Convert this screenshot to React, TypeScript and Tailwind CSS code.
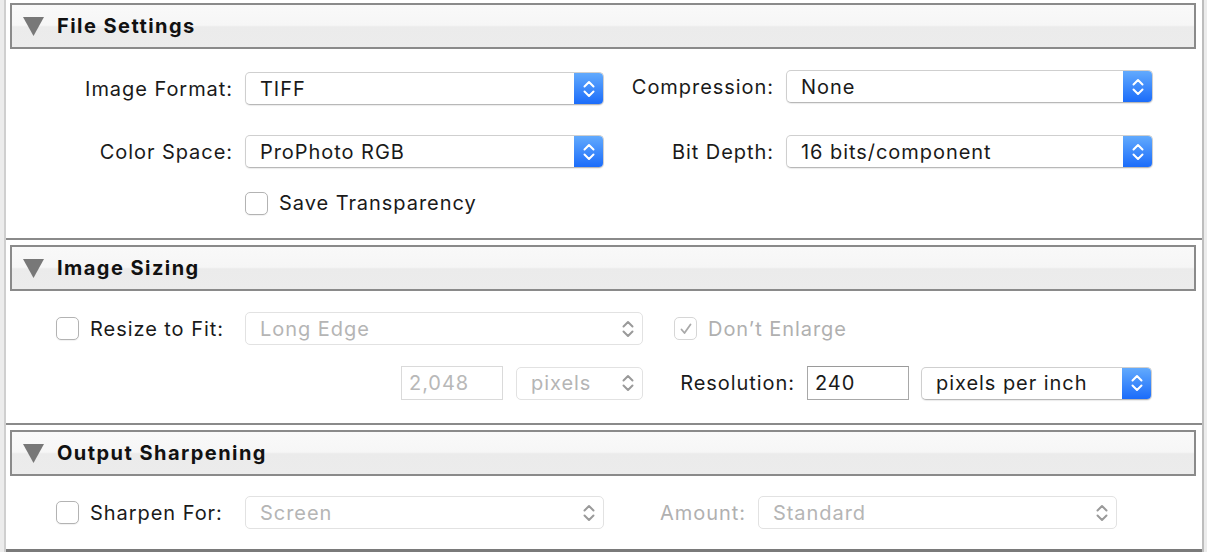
import React from "react";

const font = { fontFamily: "Inter, 'Open Sans', 'Liberation Sans', sans-serif" };

function Chevrons({ color = "#ffffff" }: { color?: string }) {
  return (
    <svg width="14" height="20" viewBox="0 0 14 20" fill="none">
      <path d="M2.5 7.5 L7 3 L11.5 7.5" stroke={color} strokeWidth="2" strokeLinecap="round" strokeLinejoin="round" />
      <path d="M2.5 12.5 L7 17 L11.5 12.5" stroke={color} strokeWidth="2" strokeLinecap="round" strokeLinejoin="round" />
    </svg>
  );
}

function Header({ title }: { title: string }) {
  return (
    <div className="ml-[4px] mr-[6px] h-[46px] border-2 border-[#8a8a8a] bg-[linear-gradient(to_bottom,#f9f9f9_0%,#f6f6f6_48%,#ebebeb_52%,#ececec_100%)] flex items-center">
      <svg width="22" height="20" viewBox="0 0 22 20" className="ml-[11px]">
        <polygon points="0,1 21,1 10.5,20" fill="#787878" />
      </svg>
      <span className="ml-[12px] text-[20px] font-bold text-[#111] tracking-[1.45px]">{title}</span>
    </div>
  );
}

function Select({ value, width, disabled = false }: { value: string; width: number; disabled?: boolean }) {
  return (
    <div
      className={
        "h-[33px] rounded-[5px] flex items-center overflow-hidden bg-white " +
        (disabled
          ? "border border-[#e2e2e2]"
          : "border border-[#cfcfcf] border-b-[#b8b8b8] shadow-[0_1px_1px_rgba(0,0,0,0.08)]")
      }
      style={{ width }}
    >
      <span className={"flex-1 pl-[14px] text-[20px] " + (disabled ? "text-[#b5b5b5]" : "text-[#1a1a1a]")}>{value}</span>
      {disabled ? (
        <div className="w-[29px] h-full flex items-center justify-center">
          <Chevrons color="#9a9a9a" />
        </div>
      ) : (
        <div className="w-[29px] h-full flex items-center justify-center bg-[linear-gradient(to_bottom,#62aafd,#1b6cfa)]">
          <Chevrons />
        </div>
      )}
    </div>
  );
}

function Checkbox({ checked = false, disabled = false }: { checked?: boolean; disabled?: boolean }) {
  return (
    <div
      className={
        "w-[23px] h-[23px] rounded-[5px] bg-white flex items-center justify-center " +
        (disabled ? "border border-[#d6d6d6]" : "border border-[#b3b3b3] shadow-[0_1px_1px_rgba(0,0,0,0.06)]")
      }
    >
      {checked && (
        <svg width="14" height="14" viewBox="0 0 14 14" fill="none">
          <path d="M2.5 7.5 L5.5 11 L11.5 2.5" stroke="#a9a9a9" strokeWidth="1.8" strokeLinecap="round" strokeLinejoin="round" />
        </svg>
      )}
    </div>
  );
}

function Label({ text, width, disabled = false }: { text: string; width: number; disabled?: boolean }) {
  return (
    <div className={"text-right text-[20px] pr-[12px] whitespace-nowrap " + (disabled ? "text-[#b0b0b0]" : "text-[#1a1a1a]")} style={{ width }}>
      {text}
    </div>
  );
}

function TextField({ value, width, disabled = false }: { value: string; width: number; disabled?: boolean }) {
  return (
    <div
      className={
        "h-[34px] bg-white flex items-center pl-[7px] text-[20px] " +
        (disabled ? "border border-[#dadada] text-[#b8b8b8]" : "border border-[#a8a8a8] border-t-[#9a9a9a] text-[#1a1a1a]")
      }
      style={{ width }}
    >
      {value}
    </div>
  );
}

export default function App() {
  return (
    <div className="w-[1207px] h-[552px] bg-[#ececec] overflow-hidden tracking-[0.95px]" style={font}>
      <div className="ml-[4px] w-[1200px] h-[552px] bg-white border-x-2 border-l-[#cfcfcf] border-r-[#bdbdbd] flex flex-col">
        {/* File Settings */}
        <div className="pt-[3px]">
          <Header title="File Settings" />
          <div className="h-[189px] flex flex-col pt-[23px]">
            <div className="flex items-start">
              <div className="flex items-center">
                <Label text="Image Format:" width={239} />
                <Select value="TIFF" width={359} />
              </div>
              <div className="flex items-center -mt-[2px]">
                <Label text="Compression:" width={182} />
                <Select value="None" width={367} />
              </div>
            </div>
            <div className="flex items-center mt-[30px]">
              <Label text="Color Space:" width={239} />
              <Select value="ProPhoto RGB" width={359} />
              <Label text="Bit Depth:" width={182} />
              <Select value="16 bits/component" width={367} />
            </div>
            <div className="flex items-center mt-[20px] ml-[239px]">
              <Checkbox />
              <span className="ml-[11px] text-[20px] text-[#1a1a1a]">Save Transparency</span>
            </div>
          </div>
        </div>
        <div className="h-[2px] bg-[#8a8a8a]" />

        {/* Image Sizing */}
        <div className="pt-[5px]">
          <Header title="Image Sizing" />
          <div className="h-[132px] flex flex-col pt-[21px]">
            <div className="flex items-center">
              <div className="ml-[50px]"><Checkbox /></div>
              <span className="ml-[11px] w-[155px] text-[20px] text-[#1a1a1a] whitespace-nowrap">Resize to Fit:</span>
              <Select value="Long Edge" width={398} disabled />
              <div className="ml-[31px]"><Checkbox checked disabled /></div>
              <span className="ml-[11px] text-[20px] text-[#b0b0b0]">Don’t Enlarge</span>
            </div>
            <div className="flex items-center mt-[21px]">
              <div className="ml-[395px]"><TextField value="2,048" width={102} disabled /></div>
              <div className="ml-[13px]"><Select value="pixels" width={127} disabled /></div>
              <Label text="Resolution:" width={164} />
              <TextField value="240" width={102} />
              <div className="ml-[12px]"><Select value="pixels per inch" width={231} /></div>
            </div>
          </div>
        </div>
        <div className="h-[2px] bg-[#8a8a8a]" />

        {/* Output Sharpening */}
        <div className="pt-[5px]">
          <Header title="Output Sharpening" />
          <div className="h-[73px] flex flex-col pt-[20px]">
            <div className="flex items-center">
              <div className="ml-[50px]"><Checkbox /></div>
              <span className="ml-[11px] w-[155px] text-[20px] text-[#1a1a1a] whitespace-nowrap">Sharpen For:</span>
              <Select value="Screen" width={359} disabled />
              <Label text="Amount:" width={154} disabled />
              <Select value="Standard" width={359} disabled />
            </div>
          </div>
        </div>
        <div className="h-[3px] bg-[#7a7a7a]" />
      </div>
    </div>
  );
}
